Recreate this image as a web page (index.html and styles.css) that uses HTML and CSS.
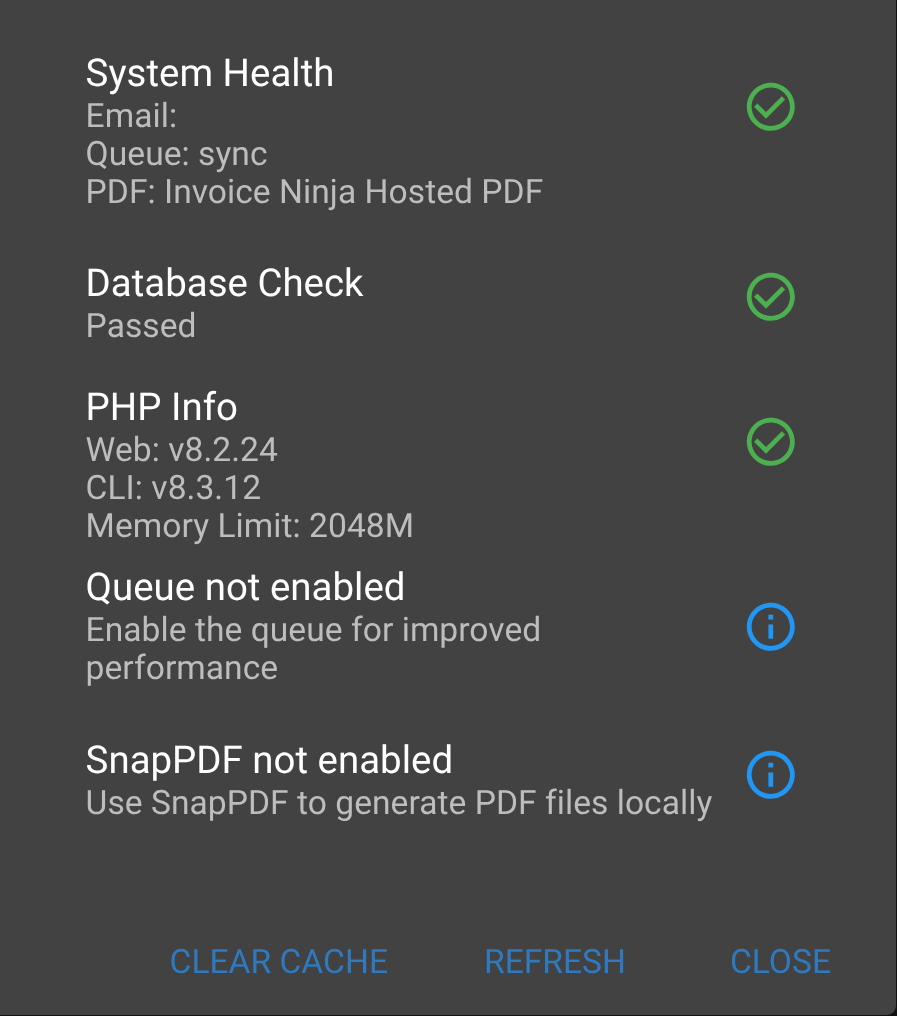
FILE: index.html
```html
<!DOCTYPE html>
<html lang="en">
<head>
<meta charset="utf-8">
<title>System Health</title>
<link rel="stylesheet" href="styles.css">
</head>
<body>
<div class="dialog">
  <div class="list">
    <div class="row r1">
      <div class="txt"><div class="title">System Health</div><div class="sub">Email:<br>Queue: sync<br>PDF: Invoice Ninja Hosted PDF</div></div>
      <svg class="ico" viewBox="0 0 24 24"><path class="ok" d="M16.59 7.58 10 14.17l-3.59-3.58L5 12l5 5 8-8zM12 2C6.48 2 2 6.48 2 12s4.48 10 10 10 10-4.48 10-10S17.52 2 12 2zm0 18c-4.42 0-8-3.58-8-8s3.58-8 8-8 8 3.58 8 8-3.58 8-8 8z"/></svg>
    </div>
    <div class="row r2">
      <div class="txt"><div class="title">Database Check</div><div class="sub">Passed</div></div>
      <svg class="ico" viewBox="0 0 24 24"><path class="ok" d="M16.59 7.58 10 14.17l-3.59-3.58L5 12l5 5 8-8zM12 2C6.48 2 2 6.48 2 12s4.48 10 10 10 10-4.48 10-10S17.52 2 12 2zm0 18c-4.42 0-8-3.58-8-8s3.58-8 8-8 8 3.58 8 8-3.58 8-8 8z"/></svg>
    </div>
    <div class="row r3">
      <div class="txt"><div class="title">PHP Info</div><div class="sub">Web: v8.2.24<br>CLI: v8.3.12<br>Memory Limit: 2048M</div></div>
      <svg class="ico" viewBox="0 0 24 24"><path class="ok" d="M16.59 7.58 10 14.17l-3.59-3.58L5 12l5 5 8-8zM12 2C6.48 2 2 6.48 2 12s4.48 10 10 10 10-4.48 10-10S17.52 2 12 2zm0 18c-4.42 0-8-3.58-8-8s3.58-8 8-8 8 3.58 8 8-3.58 8-8 8z"/></svg>
    </div>
    <div class="row r4">
      <div class="txt"><div class="title">Queue not enabled</div><div class="sub">Enable the queue for improved<br>performance</div></div>
      <svg class="ico" viewBox="0 0 24 24"><path class="info" d="M11 7h2v2h-2zm0 4h2v6h-2zm1-9C6.48 2 2 6.48 2 12s4.48 10 10 10 10-4.48 10-10S17.52 2 12 2zm0 18c-4.41 0-8-3.59-8-8s3.59-8 8-8 8 3.59 8 8-3.59 8-8 8z"/></svg>
    </div>
    <div class="row r5">
      <div class="txt"><div class="title">SnapPDF not enabled</div><div class="sub">Use SnapPDF to generate PDF files locally</div></div>
      <svg class="ico" viewBox="0 0 24 24"><path class="info" d="M11 7h2v2h-2zm0 4h2v6h-2zm1-9C6.48 2 2 6.48 2 12s4.48 10 10 10 10-4.48 10-10S17.52 2 12 2zm0 18c-4.41 0-8-3.59-8-8s3.59-8 8-8 8 3.59 8 8-3.59 8-8 8z"/></svg>
    </div>
  </div>
  <div class="actions">
    <span class="btn">CLEAR CACHE</span>
    <span class="btn">REFRESH</span>
    <span class="btn last">CLOSE</span>
  </div>
</div>
</body>
</html>
```
FILE: styles.css
```css
* { box-sizing: border-box; }
html, body { margin: 0; padding: 0; height: 100%; background: #111; }
body { font-family: Roboto, sans-serif; overflow: hidden; text-rendering: geometricPrecision; }
.dialog { width: 896px; height: 1015px; background: #424242; border-bottom-right-radius: 9px; padding-top: 52px; display: flex; flex-direction: column; will-change: transform; }
.list { display: flex; flex-direction: column; flex: 1; }
.row { display: flex; align-items: flex-start; padding: 0 96px 0 85.6px; justify-content: space-between; }
.r1 { height: 210px; }
.r2 { height: 124px; }
.r3 { height: 180px; }
.r4 { height: 173px; }
.r1 .ico { margin-top: 26px; }
.r2 .ico { margin-top: 6px; }
.r3 .ico { margin-top: 27px; }
.r4 .ico { margin-top: 32px; }
.r5 .ico { margin-top: 7px; }
.title { font-size: 38.4px; line-height: 44px; color: #fff; letter-spacing: 0.02px; }
.sub { font-size: 33.6px; line-height: 38.4px; color: #bdbdbd; padding-top: 1.5px; letter-spacing: 0.04px; }
.ico { width: 57.6px; height: 57.6px; flex: none; }
.ok { fill: #4caf50; }
.info { fill: #2196f3; }
.actions { display: flex; justify-content: flex-end; gap: 96px; padding: 0 65px 32px 0; }
.btn { font-size: 33.6px; line-height: 40px; color: #2f7abf; }
.last { margin-left: 8px; }
```
